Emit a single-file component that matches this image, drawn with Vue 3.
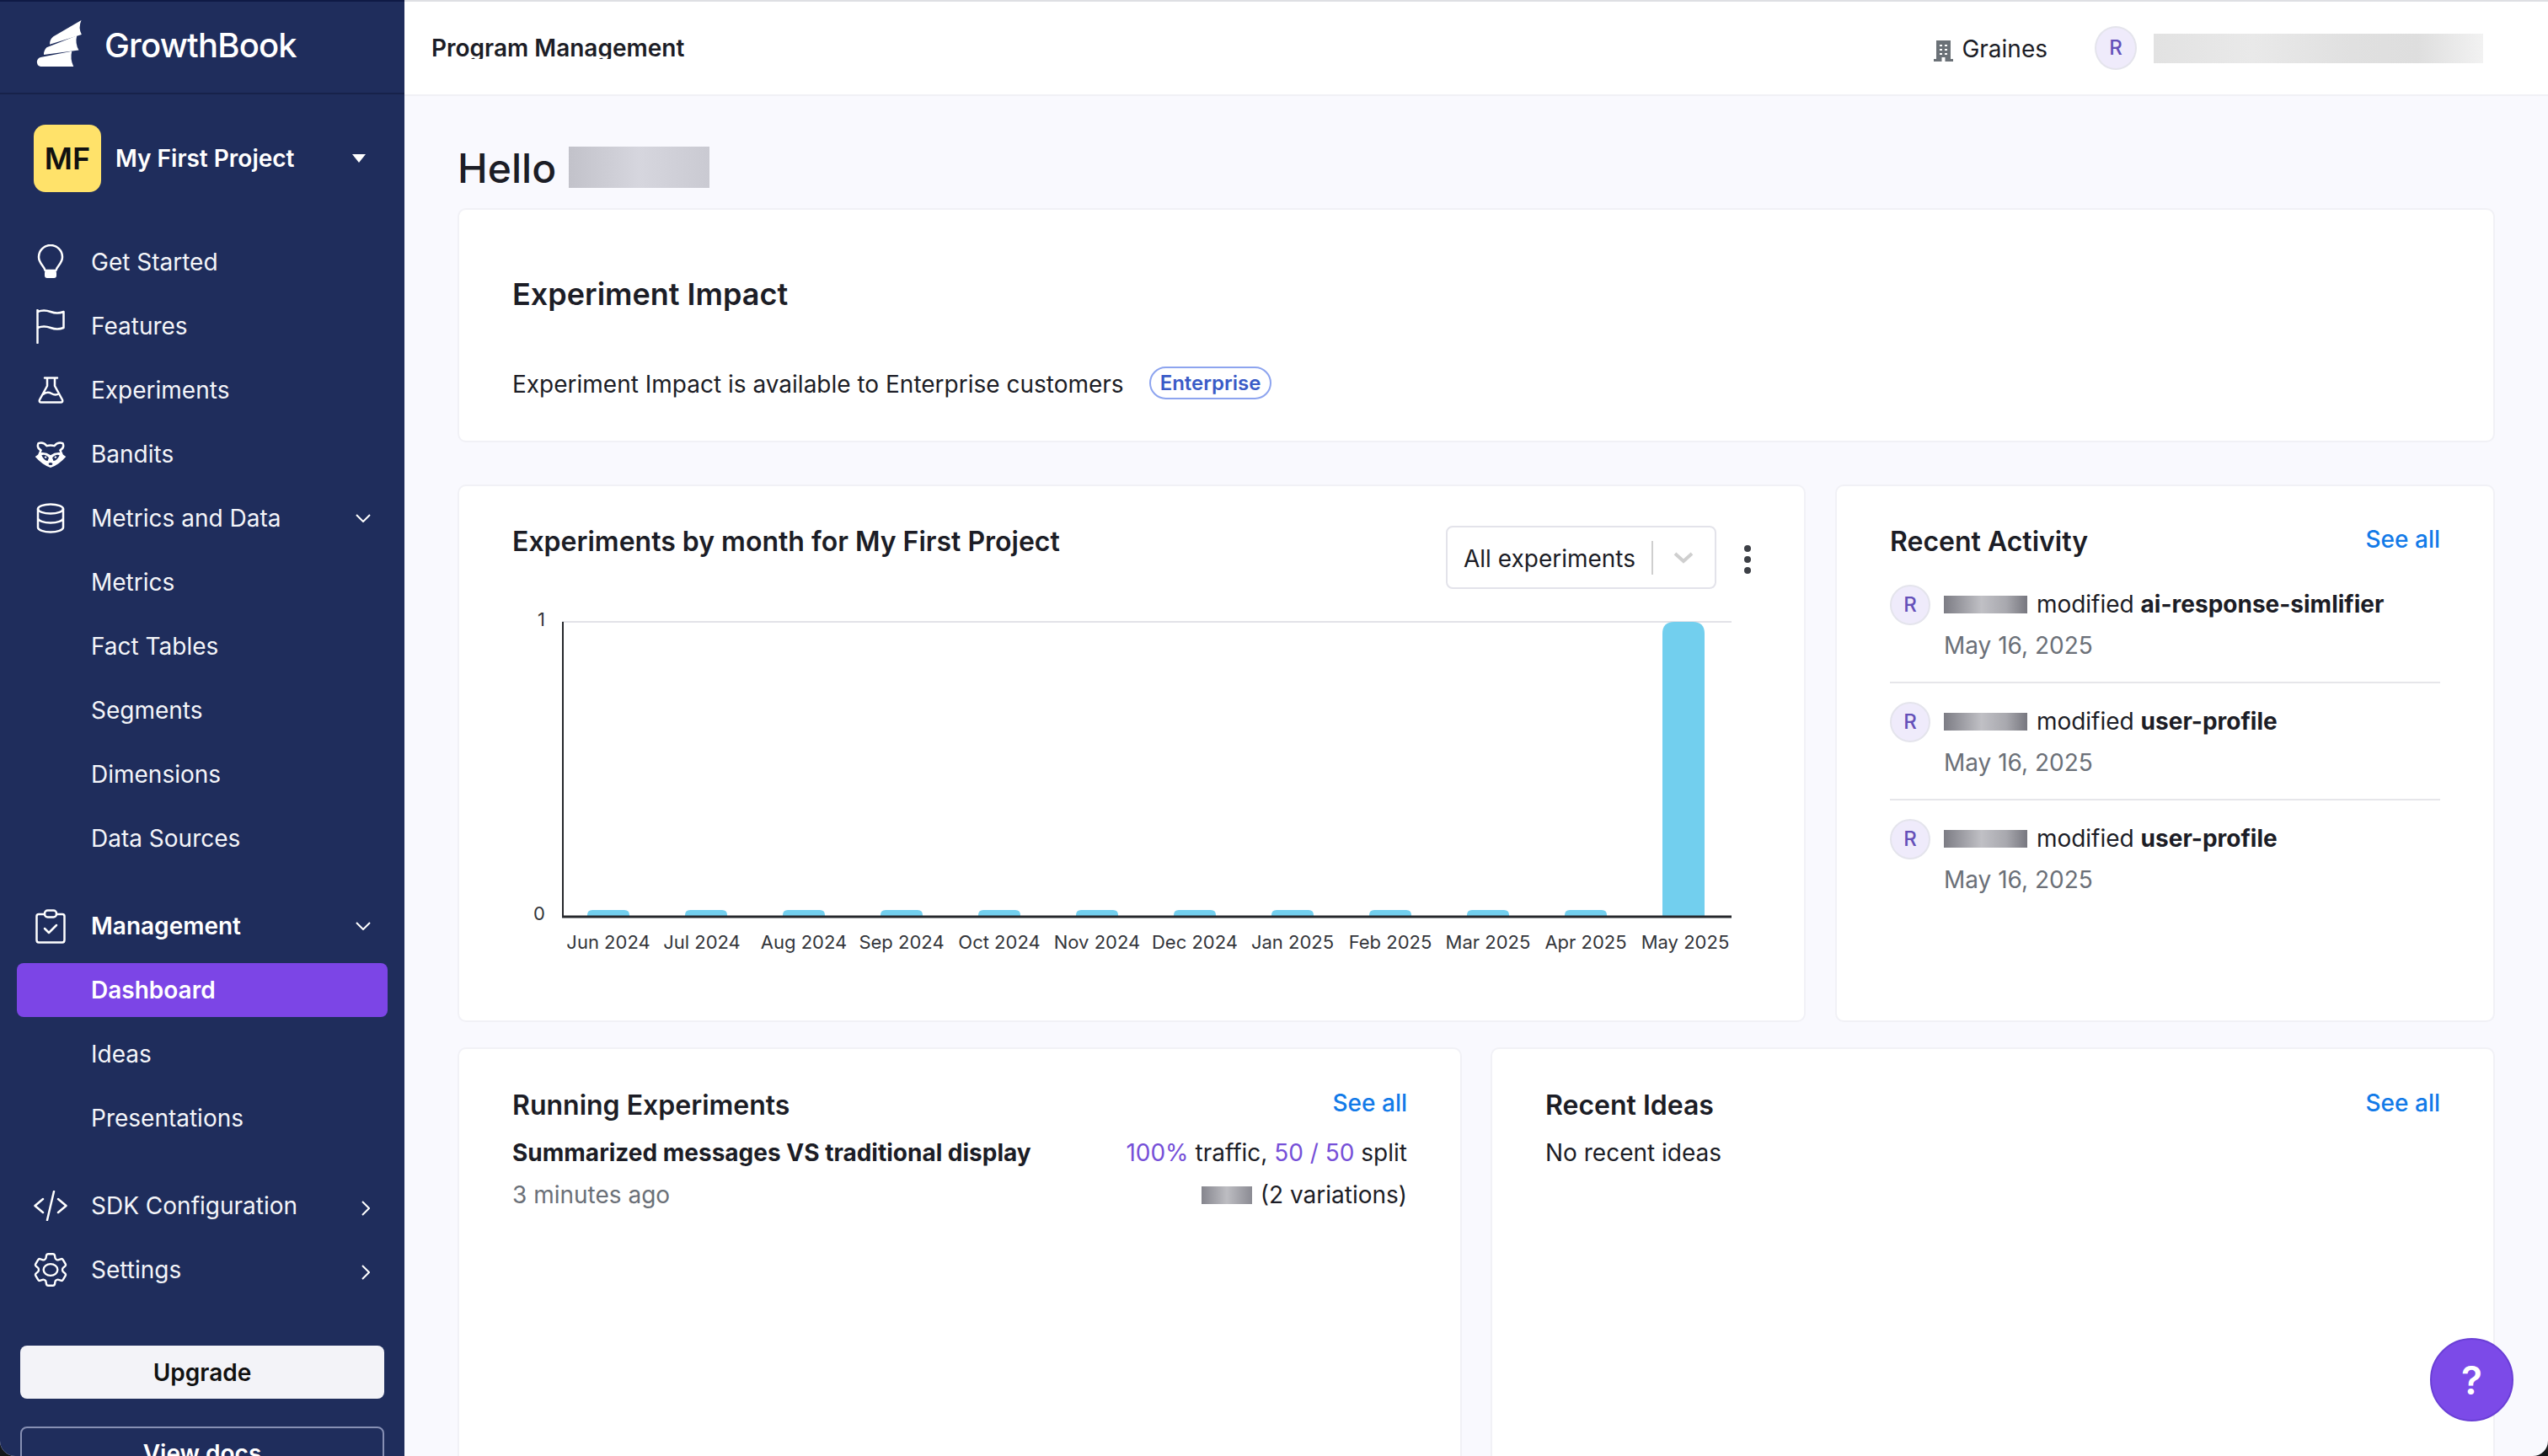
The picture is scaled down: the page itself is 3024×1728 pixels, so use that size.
<template>
  <div class="shell">
    <aside class="sidebar">
      <div class="brand">
        <svg class="brand-logo" viewBox="70 28 165 172">
          <path d="M85 197Q72 195 72 180Q73 168 85 164L197 142Q190 170 203 197Z" />
          <path d="M97 155Q95 140 107 128L215 86Q208 115 222 138Z" />
          <path d="M118 118Q117 102 130 90L231 31Q219 58 232 82Z" />
        </svg>
        <span class="brand-name">GrowthBook</span>
      </div>

      <div class="project">
        <div class="project-badge">MF</div>
        <span class="project-name">My First Project</span>
        <svg class="project-caret" viewBox="0 0 16 10"><path d="M0 0H16L8 10Z" /></svg>
      </div>

      <nav class="nav">
        <a class="nav-item"><span class="nav-icon">
          <svg width="32" height="42" viewBox="0 0 32 42" class="line"><path d="M9.5 31C9 26 2 23 2 15A14 14 0 0 1 30 15C30 23 23 26 22.5 31Z" /><rect x="9" y="31" width="14" height="9" rx="3" class="solid" /></svg>
        </span>Get Started</a>
        <a class="nav-item"><span class="nav-icon">
          <svg width="34" height="41" viewBox="0 0 34 41" class="line"><path d="M1.5 1V40M1.5 3Q9 0 17 3T32.5 3V22Q25 25 17 22T1.5 22" /></svg>
        </span>Features</a>
        <a class="nav-item"><span class="nav-icon">
          <svg width="31" height="32" viewBox="0 0 31 32" class="line"><path d="M8 1.5H23M11 2V11L2 27.500Q1 30.500 4 30.500H27Q30 30.500 29 27.500L20 11V2M6 21Q11 17 16 20T25 20" /></svg>
        </span>Experiments</a>
        <a class="nav-item"><span class="nav-icon">
          <svg width="38" height="31" viewBox="0 0 110 90">
            <path d="M16 44L22 30Q6 22 13 6Q30 0 42 15Q55 11 68 15Q80 0 97 6Q104 22 88 30L94 44" fill="none" stroke="#fff" stroke-width="7" stroke-linecap="round" stroke-linejoin="round" />
            <path d="M2 52L22 38Q40 36 55 47Q70 36 88 38L108 52Q84 80 55 90Q26 80 2 52Z" fill="#fff" />
            <path d="M24 47Q38 42 49 56L45 67Q32 65 24 47ZM86 47Q72 42 61 56L65 67Q78 65 86 47Z" fill="#1f2d5c" />
            <circle cx="38" cy="54" r="3.500" fill="#fff" /><circle cx="72" cy="54" r="3.500" fill="#fff" />
            <ellipse cx="55" cy="77" rx="7" ry="4.500" fill="#1f2d5c" />
          </svg>
        </span>Bandits</a>
        <a class="nav-item"><span class="nav-icon">
          <svg width="34" height="36" viewBox="0 0 34 36" class="line"><ellipse cx="17" cy="7" rx="15" ry="5.500" /><path d="M2 7V29C2 32 9 34.500 17 34.500S32 32 32 29V7M2 18C2 21 9 23.500 17 23.500S32 21 32 18" /></svg>
        </span>Metrics and Data<svg class="chev" viewBox="0 0 18 10"><path d="M1 1L9 9L17 1" /></svg></a>
        <a v-for="item in dataLinks" :key="item" class="nav-item sub">{{ item }}</a>

        <a class="nav-item strong group-start"><span class="nav-icon">
          <svg width="36" height="41" viewBox="0 0 36 41" class="line"><path d="M10 6H4Q1.500 6 1.500 8.500V36.500Q1.500 39.500 4 39.500H32Q34.500 39.500 34.500 36.500V8.500Q34.500 6 32 6H26" /><rect x="11" y="1.500" width="14" height="8" rx="3.500" /><path d="M11 23L16 28L25 19" /></svg>
        </span>Management<svg class="chev" viewBox="0 0 18 10"><path d="M1 1L9 9L17 1" /></svg></a>
        <a class="nav-item sub strong active">Dashboard</a>
        <a class="nav-item sub">Ideas</a>
        <a class="nav-item sub">Presentations</a>

        <a class="nav-item group-start"><span class="nav-icon">
          <svg width="40" height="36" viewBox="0 0 40 36" class="line"><path d="M11 10L1.500 18L11 26M29 10L38.500 18L29 26M24 1L16 35" /></svg>
        </span>SDK Configuration<svg class="chev side" viewBox="0 0 10 18"><path d="M1 1L9 9L1 17" /></svg></a>
        <a class="nav-item"><span class="nav-icon">
          <svg width="50" height="50" viewBox="0 0 24 24" class="line gear"><path d="M9.594 3.94c.09-.542.56-.94 1.11-.94h2.593c.55 0 1.02.398 1.11.94l.213 1.281c.063.374.313.686.645.87.074.04.147.083.22.127.325.196.72.257 1.075.124l1.217-.456a1.125 1.125 0 0 1 1.37.49l1.296 2.247a1.125 1.125 0 0 1-.26 1.431l-1.003.827c-.293.241-.438.613-.43.992a7.723 7.723 0 0 1 0 .255c-.008.378.137.75.43.991l1.004.827c.424.35.534.955.26 1.43l-1.298 2.247a1.125 1.125 0 0 1-1.369.491l-1.217-.456c-.355-.133-.75-.072-1.076.124a6.47 6.47 0 0 1-.22.128c-.331.183-.581.495-.644.869l-.213 1.281c-.09.543-.56.94-1.11.94h-2.594c-.55 0-1.019-.398-1.11-.94l-.213-1.281c-.062-.374-.312-.686-.644-.87a6.52 6.52 0 0 1-.22-.127c-.325-.196-.72-.257-1.076-.124l-1.217.456a1.125 1.125 0 0 1-1.369-.49l-1.297-2.247a1.125 1.125 0 0 1 .26-1.431l1.004-.827c.292-.24.437-.613.43-.991a6.932 6.932 0 0 1 0-.255c.007-.38-.138-.751-.43-.992l-1.004-.827a1.125 1.125 0 0 1-.26-1.43l1.297-2.247a1.125 1.125 0 0 1 1.37-.491l1.216.456c.356.133.751.072 1.076-.124.072-.044.146-.086.22-.128.332-.183.582-.495.644-.869l.214-1.28Z" /><ellipse cx="12" cy="12" rx="4" ry="3.300" /></svg>
        </span>Settings<svg class="chev side" viewBox="0 0 10 18"><path d="M1 1L9 9L1 17" /></svg></a>
      </nav>

      <button class="side-btn upgrade">Upgrade</button>
      <button class="side-btn docs">View docs</button>
    </aside>

    <div class="content">
      <header class="topbar">
        <div class="top-title">Program Management</div>
        <svg class="org-icon" viewBox="0 0 23 25">
          <path d="M3 0H20V22H23V25H0V22H3Z" fill="#6b7177" />
          <path d="M7 5h3v2H7zM13 5h3v2h-3zM7 10h3v2H7zM13 10h3v2h-3zM7 15h3v2H7zM13 15h3v2h-3zM9.500 20h4v5h-4z" fill="#fff" />
        </svg>
        <span class="org-name">Graines</span>
        <div class="avatar top-avatar">R</div>
        <div class="redact user-redact"></div>
      </header>

      <main class="page">
        <h1 class="hello">Hello <span class="redact hello-redact"></span></h1>

        <section class="card impact">
          <h2 class="card-title large">Experiment Impact</h2>
          <p class="impact-text">Experiment Impact is available to Enterprise customers<span class="badge">Enterprise</span></p>
        </section>

        <div class="row row-chart">
          <section class="card chart-card">
            <div class="chart-head">
              <h2 class="card-title">Experiments by month for My First Project</h2>
              <div class="select">
                <span class="select-value">All experiments</span>
                <span class="select-sep"></span>
                <svg class="select-chev" viewBox="0 0 24 14"><path d="M2 2L12 11L22 2" /></svg>
              </div>
              <svg class="more" viewBox="0 0 8 34"><circle cx="4" cy="4" r="4" /><circle cx="4" cy="17" r="4" /><circle cx="4" cy="30" r="4" /></svg>
            </div>
            <svg class="chart" viewBox="608 699 1470 451">
              <line x1="667" y1="738" x2="2055" y2="738" stroke="#e2e2e8" stroke-width="2" />
              <path v-for="bar in bars" :key="bar.month" :d="bar.d" fill="#72cfee" />
              <line x1="668" y1="738" x2="668" y2="1088" stroke="#26282c" stroke-width="2" />
              <line x1="667" y1="1088" x2="2055" y2="1088" stroke="#26282c" stroke-width="3" />
              <text x="647" y="743" text-anchor="end" class="tick">1</text>
              <text x="647" y="1092" text-anchor="end" class="tick">0</text>
              <text v-for="bar in bars" :key="bar.month + '-label'" :x="bar.labelX" y="1126" text-anchor="middle" class="tick">{{ bar.month }}</text>
            </svg>
          </section>

          <section class="card activity-card">
            <div class="head-row">
              <h2 class="card-title">Recent Activity</h2>
              <a class="see-all">See all</a>
            </div>
            <div v-for="(a, i) in activity" :key="i" class="activity" :class="{ divided: i < activity.length - 1 }">
              <div class="avatar">R</div>
              <div>
                <div class="line-text first"><span class="redact name-redact"></span> modified <b>{{ a }}</b></div>
                <div class="line-text muted">May 16, 2025</div>
              </div>
            </div>
          </section>
        </div>

        <div class="row row-bottom">
          <section class="card bottom-card">
            <div class="head-row">
              <h2 class="card-title">Running Experiments</h2>
              <a class="see-all">See all</a>
            </div>
            <div class="running">
              <div>
                <div class="line-text"><b>Summarized messages VS traditional display</b></div>
                <div class="line-text muted">3 minutes ago</div>
              </div>
              <div class="running-right">
                <div class="line-text"><span class="accent">100%</span> traffic, <span class="accent">50 / 50</span> split</div>
                <div class="line-text"><span class="redact small-redact"></span> (2 variations)</div>
              </div>
            </div>
          </section>
          <section class="card bottom-card">
            <div class="head-row">
              <h2 class="card-title">Recent Ideas</h2>
              <a class="see-all">See all</a>
            </div>
            <div class="line-text">No recent ideas</div>
          </section>
        </div>
      </main>
    </div>

    <button class="help">?</button>
  </div>
</template>

<script setup>
const dataLinks = ['Metrics', 'Fact Tables', 'Segments', 'Dimensions', 'Data Sources']
const activity = ['ai-response-simlifier', 'user-profile', 'user-profile']

const months = ['Jun 2024', 'Jul 2024', 'Aug 2024', 'Sep 2024', 'Oct 2024', 'Nov 2024', 'Dec 2024', 'Jan 2025', 'Feb 2025', 'Mar 2025', 'Apr 2025', 'May 2025']

// the chart nudges a couple of labels off their bar centre
const labelNudge = { 'Jul 2024': -5, 'May 2025': 2 }

const bars = months.map((month, i) => {
  const x = 697 + 116 * i
  const top = i === 11 ? 738 : 1080
  const r = i === 11 ? 14 : 6
  return {
    month,
    labelX: x + 25 + (labelNudge[month] || 0),
    d: `M${x} 1088V${top + r}Q${x} ${top} ${x + r} ${top}H${x + 50 - r}Q${x + 50} ${top} ${x + 50} ${top + r}V1088Z`,
  }
})
</script>

<style scoped>
.shell {
  position: relative;
  display: flex;
  width: 3024px;
  height: 1728px;
  overflow: hidden;
  border-radius: 0 0 18px 18px;
  background: #f9f9fe;
  font-family: Inter, "Noto Sans", sans-serif;
  font-size: 28px;
  color: #1c1d26;
}

.sidebar {
  width: 480px;
  flex-shrink: 0;
  background: #1f2d5c;
  color: #fff;
}

.brand {
  display: flex;
  align-items: center;
  height: 112px;
  box-sizing: border-box;
  padding-left: 43px;
  border-top: 2px solid #0f1a45;
  border-bottom: 2px solid #17224a;
}
.brand-logo { width: 55px; height: 57px; fill: #fff; margin-top: -10px; }
.brand-name {
  margin-left: 26px;
  margin-top: -6px;
  font-size: 40px;
  font-weight: 500;
  letter-spacing: -0.8px;
}

.project {
  display: flex;
  align-items: center;
  margin: 36px 0 51px 40px;
  padding-right: 46px;
}
.project-badge {
  width: 80px;
  height: 80px;
  line-height: 80px;
  text-align: center;
  border-radius: 14px;
  background: #ffe26a;
  color: #111;
  font-size: 36px;
  font-weight: 600;
}
.project-name { flex: 1; margin-left: 17px; font-weight: 600; font-size: 28px; }
.project-caret { width: 16px; height: 10px; fill: #fff; }

.nav { display: flex; flex-direction: column; gap: 12px; }
.nav-item {
  display: flex;
  align-items: center;
  height: 64px;
  margin: 0 20px;
  padding-left: 18px;
  border-radius: 8px;
  color: #f4f5f9;
}
.nav-icon {
  display: flex;
  align-items: center;
  justify-content: center;
  width: 48px;
  margin-right: 22px;
  margin-left: -2px;
  padding-right: 2px;
}
.nav-item.sub { padding-left: 88px; }
.nav-item.strong { font-weight: 600; color: #fff; }
.nav-item.group-start { margin-top: 28px; }
.nav-item.active { background: #7c45e6; }

.line { fill: none; stroke: #fff; stroke-width: 2.5; stroke-linecap: round; stroke-linejoin: round; flex-shrink: 0; }
.line .solid { fill: #fff; stroke: none; }
.gear { stroke-width: 1.150; }

.chev { margin-left: auto; fill: none; stroke: #fff; stroke-width: 2; }
.chev:not(.side) { width: 18px; height: 10px; margin-right: 20px; }
.chev.side { width: 10px; height: 18px; margin-right: 21px; margin-top: 6px; }

.side-btn {
  display: block;
  width: 432px;
  height: 63px;
  margin-left: 24px;
  border-radius: 8px;
  font-family: inherit;
  font-size: 28px;
  font-weight: 600;
}
.upgrade { margin-top: 58px; border: none; background: #f3f3f8; color: #111; }
.docs { margin-top: 33px; border: 2px solid #8790b4; background: transparent; color: #fff; }

.content { flex: 1; min-width: 0; display: flex; flex-direction: column; }

.topbar {
  display: flex;
  align-items: center;
  height: 114px;
  flex-shrink: 0;
  box-sizing: border-box;
  padding: 0 77px 0 32px;
  background: #fff;
  border-top: 2px solid #dedfe3;
  border-bottom: 2px solid #f1f1f6;
}
.top-title {
  flex: 1;
  align-self: flex-start;
  height: 26px;
  margin-top: 42px;
  line-height: 26px;
  overflow: hidden;
  font-weight: 600;
}
.org-icon { width: 23px; height: 25px; margin-top: 6px; }
.org-name { margin-left: 10px; margin-right: 56px; padding-top: 2px; }

.avatar {
  flex-shrink: 0;
  width: 48px;
  height: 48px;
  box-sizing: border-box;
  line-height: 44px;
  text-align: center;
  border: 2px solid #e4e4ec;
  border-radius: 50%;
  background: #efebfb;
  color: #6550b9;
  font-size: 24px;
  font-weight: 500;
}
.top-avatar { width: 50px; height: 52px; line-height: 48px; }

.redact { display: inline-block; vertical-align: middle; }
.user-redact {
  width: 391px;
  height: 35px;
  margin-left: 20px;
  background: linear-gradient(90deg, #e2e2e2, #e9e9e9 30%, #e0e0e0 60%, #dedede 80%, #f2f2f2);
}
.hello-redact {
  width: 167px;
  height: 49px;
  margin-left: 2px;
  margin-top: -10px;
  background: linear-gradient(90deg, #c2c2ca, #d6d6de 50%, #cacad2);
}
.name-redact {
  width: 99px;
  height: 21px;
  margin-top: -4px;
  margin-right: 3px;
  background: linear-gradient(90deg, #7c7c84, #c0c0c5 45%, #a8a8ae 75%, #77777f);
}
.small-redact {
  width: 60px;
  height: 21px;
  margin-top: -4px;
  margin-right: 2px;
  background: linear-gradient(90deg, #85858d, #bdbdc2 50%, #8b8b93);
}

.page { flex: 1; min-height: 0; padding: 56px 63px 0; }
.hello {
  margin: 0 0 17px;
  height: 60px;
  line-height: 60px;
  font-size: 48px;
  font-weight: 500;
}

.card {
  box-sizing: border-box;
  background: #fff;
  border: 2px solid #f1f1f6;
  border-radius: 10px;
  padding: 47px 63px 0;
}
.card-title { margin: 0; font-size: 32px; line-height: 38px; font-weight: 600; }
.card-title.large { font-size: 36px; }

.impact { height: 278px; padding-top: 81px; }
.impact-text { margin: 63px 0 0; line-height: 50px; }
.badge {
  display: inline-block;
  margin-left: 30px;
  padding: 0 11px;
  line-height: 35px;
  border: 2px solid #8da4ef;
  border-radius: 20px;
  color: #3a5bc7;
  font-size: 24px;
  font-weight: 600;
  vertical-align: 3px;
}

.row { display: grid; }
.row-chart { grid-template-columns: 1600px 783px; column-gap: 35px; margin-top: 50px; }
.row-chart .card { height: 638px; }
.row-bottom { grid-template-columns: 1192px 1192px; column-gap: 34px; margin-top: 30px; }
.bottom-card { height: 600px; padding-top: 48px; }

.chart-head { display: flex; align-items: flex-start; }
.chart-head .card-title { flex: 1; }
.select {
  display: flex;
  align-items: center;
  width: 321px;
  height: 75px;
  box-sizing: border-box;
  padding-left: 19px;
  border: 2px solid #e3e3ea;
  border-radius: 8px;
}
.select-value { flex: 1; padding-top: 2px; }
.select-sep { width: 2px; height: 40px; background: #cfcfcf; }
.select-chev {
  width: 24px;
  height: 14px;
  margin: 0 25px 0 24px;
  fill: none;
  stroke: #cfcfcf;
  stroke-width: 4;
}
.more { width: 8px; height: 34px; margin: 23px 0 0 33px; fill: #3d4046; }
.chart { display: block; width: 1470px; height: 451px; }
.tick { font-size: 22px; fill: #33353a; font-family: Inter, sans-serif; }

.head-row {
  display: flex;
  justify-content: space-between;
  align-items: flex-start;
  margin-bottom: 12px;
}
.see-all { color: #127ae8; font-weight: 500; line-height: 32px; }

.activity-card .head-row { margin-bottom: 10px; }
.activity { display: flex; gap: 16px; padding: 18px 0; }
.activity .avatar { margin-top: 4px; }
.activity.divided { border-bottom: 2px solid #e6e6ea; padding-bottom: 17px; }

.line-text { line-height: 50px; white-space: nowrap; }
.activity .line-text { line-height: 51px; }
.activity .line-text.first { height: 51px; box-sizing: border-box; padding-top: 2px; }
.line-text b { font-weight: 700; }
.muted { color: #6b7078; }
.accent { color: #7650d8; }

.running { display: flex; justify-content: space-between; }
.running-right { text-align: right; }

.help {
  position: absolute;
  left: 2884px;
  top: 1588px;
  width: 99px;
  height: 99px;
  border: 2px solid #6a3fd6;
  border-radius: 50%;
  background: #7c4ae8;
  color: #fff;
  font-family: inherit;
  font-size: 46px;
  font-weight: 600;
}
</style>

<style>
html, body { background: #14181a; }
</style>
